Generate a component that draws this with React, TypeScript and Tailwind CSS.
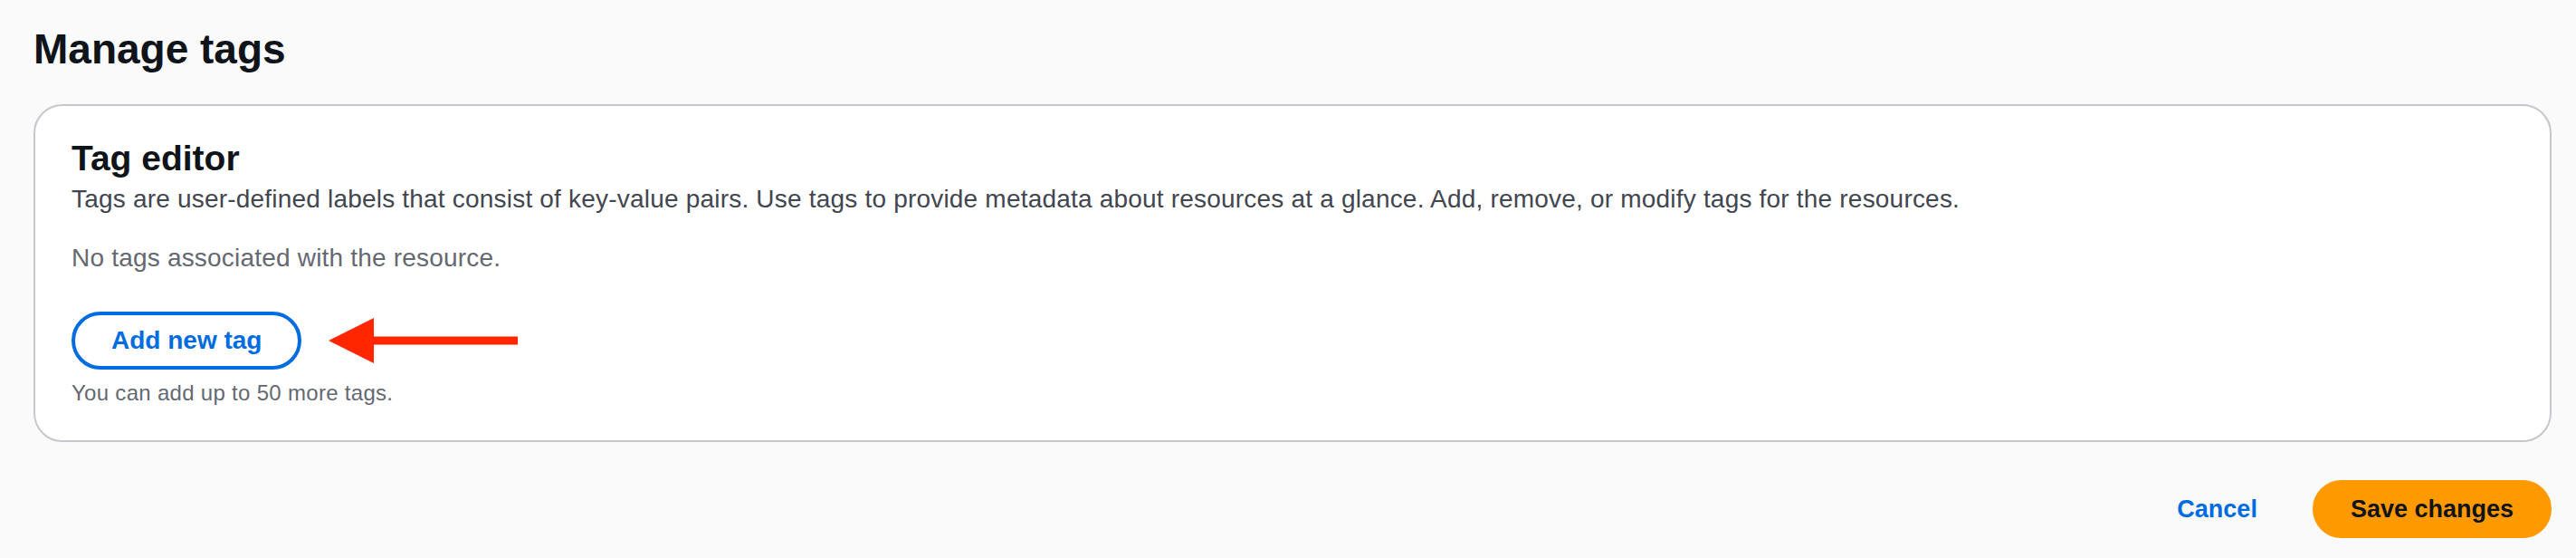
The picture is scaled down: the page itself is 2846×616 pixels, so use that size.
const font = { fontFamily: '"Liberation Sans", Arial, sans-serif' };

const ArrowLeft = () => (
    <svg width="209" height="50" viewBox="0 0 209 50" className="ml-[30px] shrink-0">
        <polygon points="0,25 50,0 50,50" fill="#ff2600" />
        <rect x="49" y="20.5" width="160" height="9" fill="#ff2600" />
    </svg>
);

const App = () => {
    return (
        <div className="min-h-screen bg-[#fafafa] text-[#0f141a]" style={font}>
            <div className="ml-[37px] mr-[27px]">
                <h1 className="pt-[26px] text-[46px] leading-[56px] font-bold">Manage tags</h1>

                <section className="mt-[33px] rounded-[32px] border-2 border-[#c6c6cd] bg-white pt-[36px] pb-[36px] px-[40px]">
                    <h2 className="text-[39px] leading-[44px] font-bold">Tag editor</h2>
                    <p className="mt-[3px] text-[28px] leading-[40px] tracking-[0.2px] text-[#424650]">
                        Tags are user-defined labels that consist of key-value pairs. Use tags to provide metadata about resources at a glance. Add, remove, or modify tags for the resources.
                    </p>
                    <p className="mt-[25px] text-[28px] leading-[40px] tracking-[0.2px] text-[#656871]">
                        No tags associated with the resource.
                    </p>
                    <div className="mt-[39px] flex items-center">
                        <button className="rounded-full border-4 border-[#006ce0] bg-white px-[40px] py-[8px] text-[28px] leading-[40px] font-bold text-[#006ce0]">
                            Add new tag
                        </button>
                        <ArrowLeft />
                    </div>
                    <p className="mt-[10px] text-[24px] leading-[32px] tracking-[0.3px] text-[#656871]">
                        You can add up to 50 more tags.
                    </p>
                </section>

                <div className="mt-[42px] flex justify-end gap-[19px]">
                    <button className="rounded-full border-4 border-transparent px-[38px] py-[8px] text-[27px] leading-[40px] font-bold text-[#006ce0]">
                        Cancel
                    </button>
                    <button className="rounded-full border-4 border-[#ff9900] bg-[#ff9900] px-[38px] py-[8px] text-[27px] leading-[40px] font-bold text-[#0f141a]">
                        Save changes
                    </button>
                </div>
            </div>
        </div>
    );
};

export default App;
